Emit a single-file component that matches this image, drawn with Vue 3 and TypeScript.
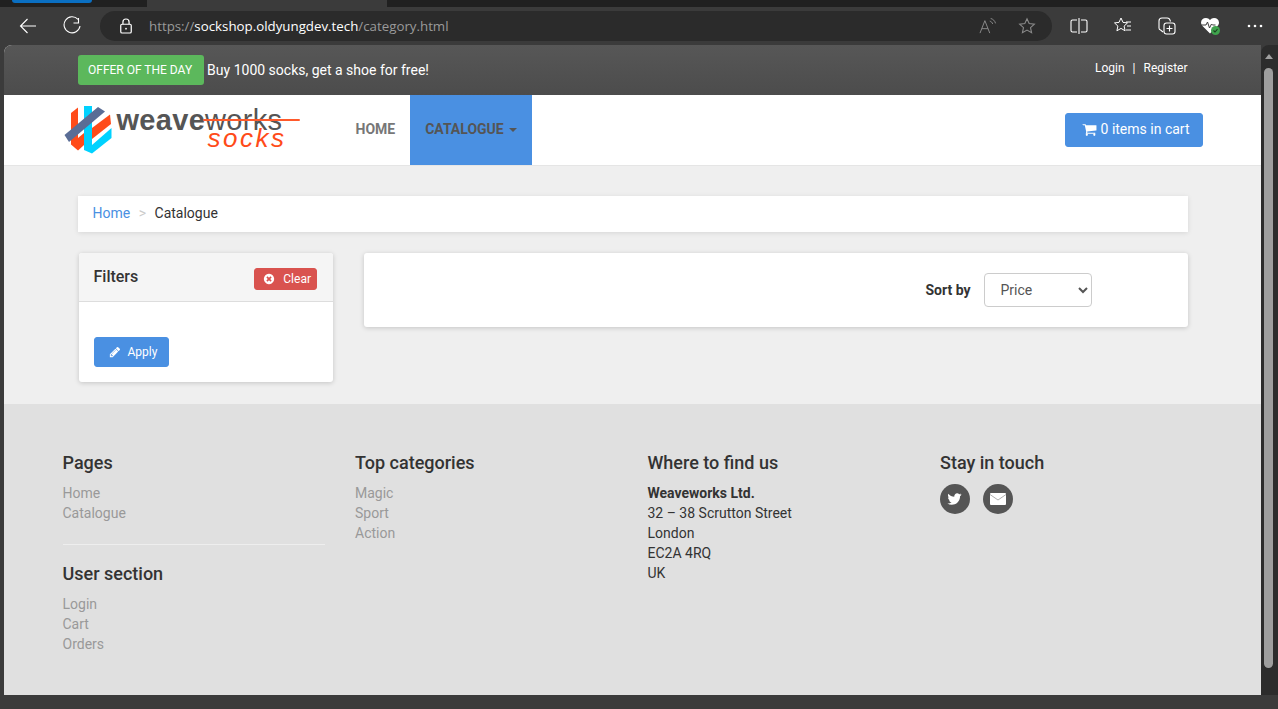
<script setup lang="ts">
interface FooterList {
    title: string;
    links: string[];
}

const pages: FooterList = { title: 'Pages', links: ['Home', 'Catalogue'] };
const userSection: FooterList = { title: 'User section', links: ['Login', 'Cart', 'Orders'] };
const categories: FooterList = { title: 'Top categories', links: ['Magic', 'Sport', 'Action'] };
const address: string[] = ['32 – 38 Scrutton Street', 'London', 'EC2A 4RQ', 'UK'];
</script>

<template>
    <div class="window">
        <div class="tabstrip">
            <span class="tab-pill"></span>
            <span class="tab-active"></span>
        </div>

        <div class="toolbar">
            <button type="button" class="tool" aria-label="Back">
                <svg viewBox="0 0 20 20" width="20" height="20" fill="none" stroke="#fff" stroke-width="1.1">
                    <path d="M18 10H2.500M9.500 3l-7 7 7 7" />
                </svg>
            </button>
            <button type="button" class="tool" aria-label="Refresh">
                <svg viewBox="0 0 20 20" width="20" height="20" fill="none" stroke="#fff" stroke-width="1.1">
                    <path d="M16 3.400a8 8 0 1 0 2 6.600" />
                    <path d="M16.500 2v5h-5" />
                </svg>
            </button>
            <div class="address">
                <svg class="lock" viewBox="0 0 16 18" width="14" height="16" fill="none" stroke="#fff" stroke-width="1.4">
                    <path d="M4.500 7V4.500a3.500 3.500 0 0 1 7 0V7" />
                    <rect x="2" y="7" width="12" height="10" rx="1.500" />
                    <circle cx="8" cy="12" r="1" fill="#fff" stroke="none" />
                </svg>
                <span class="url"><span class="url-dim">https://</span><span class="url-host">sockshop.oldyungdev.tech</span><span class="url-dim">/category.html</span></span>
                <svg class="read" viewBox="0 0 20 18" width="18" height="16" fill="none" stroke="#8a8a8a" stroke-width="1.1">
                    <path d="M1 17 6.500 3 12 17M3 12h7" />
                    <path d="M12 3.500c1.600.4 2.800 1.600 3.300 3.200" />
                    <path d="M13 .5c2.700.7 4.800 2.800 5.500 5.500" />
                </svg>
                <svg class="fav" viewBox="0 0 20 20" width="18" height="18" fill="none" stroke="#8a8a8a" stroke-width="1.2">
                    <path d="m10 2 2.400 5.300 5.800.6-4.300 3.900 1.200 5.700L10 14.600l-5.100 2.900 1.200-5.700L1.800 7.900l5.800-.6z" />
                </svg>
            </div>
            <div class="tools-right">
                <button type="button" class="tool" aria-label="Split screen">
                    <svg viewBox="0 0 20 20" width="20" height="20" fill="none" stroke="#fff" stroke-width="1.1">
                        <path d="M8 4H3.500A1.500 1.500 0 0 0 2 5.500v9A1.500 1.500 0 0 0 3.500 16H8M12 4h4.500A1.500 1.500 0 0 1 18 5.500v9a1.500 1.500 0 0 1-1.500 1.500H12M10 2v16" />
                    </svg>
                </button>
                <button type="button" class="tool" aria-label="Favorites">
                    <svg viewBox="0 0 20 20" width="20" height="20" fill="none" stroke="#fff" stroke-width="1">
                        <path d="m8 2 2 4.400 4.500.5-3.400 3.200 1 4.700L8 12.400l-4.100 2.400 1-4.700L1.500 6.900 6 6.400z" />
                        <path d="M13 6h5M14 10h4M13 14h5" />
                    </svg>
                </button>
                <button type="button" class="tool" aria-label="Collections">
                    <svg viewBox="0 0 20 20" width="20" height="20" fill="none" stroke="#fff" stroke-width="1.1">
                        <path d="M6 16 3.600 14A2 2 0 0 1 2 12V5a3 3 0 0 1 3-3h5a3 3 0 0 1 3 2l.5 1.500" />
                        <rect x="7" y="7" width="11" height="11" rx="2.500" />
                        <path d="M12.500 9.500v6M9.500 12.500h6" />
                    </svg>
                </button>
                <button type="button" class="tool" aria-label="Browser essentials">
                    <svg viewBox="0 0 22 22" width="22" height="22">
                        <path d="M10 18.500 2.500 11A5 5 0 0 1 1 7.500 5 5 0 0 1 6 3c1.700 0 3 .7 4 2 1-1.300 2.400-2 4-2a5 5 0 0 1 5 4.500c0 1.300-.5 2.500-1.500 3.500z" fill="#fff" />
                        <path d="M1 10h5l1.500-3 2 6 2-4 1 1h3" fill="none" stroke="#3b3b3b" stroke-width="1" />
                        <circle cx="15.500" cy="15.500" r="4.500" fill="#3fa34d" />
                        <path d="m13.500 15.500 1.500 1.500 2.500-2.800" fill="none" stroke="#1d3d22" stroke-width="1.1" />
                    </svg>
                </button>
                <button type="button" class="tool" aria-label="Settings and more">
                    <svg viewBox="0 0 20 20" width="20" height="20" fill="#fff">
                        <circle cx="4" cy="10" r="1.300" />
                        <circle cx="10" cy="10" r="1.300" />
                        <circle cx="16" cy="10" r="1.300" />
                    </svg>
                </button>
            </div>
        </div>

        <div class="viewport">
            <div class="page">
                <div class="topbar">
                    <div class="container topbar-row">
                        <div class="offer">
                            <a class="offer-badge">Offer of the day</a>
                            <a class="offer-text">Buy 1000 socks, get a shoe for free!</a>
                        </div>
                        <div class="account">
                            <a>Login</a>
                            <span class="account-sep">|</span>
                            <a>Register</a>
                        </div>
                    </div>
                </div>

                <nav class="navbar">
                    <div class="navbar-row">
                        <a class="logo">
                            <svg class="logo-mark" viewBox="62 104 50 52" width="50" height="52">
                                <path d="M70 113 77 107.500V150.500L70 144.500Z" fill="#ff4b19" />
                                <path d="M77 150.500 83 145V133L77 138Z" fill="#ff4b19" />
                                <path d="M91 128 109 114.500 110 124 91 139Z" fill="#ff4b19" />
                                <path d="M83 106H91V153.500L83 150Z" fill="#00d2ff" />
                                <path d="M91 145 110.500 128V138L91 153.500Z" fill="#00d2ff" />
                                <path d="M63.500 135 97 107 104 111.500 68 142Z" fill="#5a6d96" />
                            </svg>
                            <span class="wordmark"><b>weave</b>works</span>
                            <span class="strike"></span>
                            <span class="socks">socks</span>
                        </a>
                        <ul class="menu">
                            <li class="menu-item">Home</li>
                            <li class="menu-item menu-item--active">Catalogue <span class="caret"></span></li>
                        </ul>
                        <a class="btn btn-cart">
                            <svg viewBox="0 0 1792 1792" width="15" height="15" fill="#fff">
                                <path d="M704 1536q0 52-38 90t-90 38-90-38-38-90 38-90 90-38 90 38 38 90zm896 0q0 52-38 90t-90 38-90-38-38-90 38-90 90-38 90 38 38 90zm128-1088v512q0 24-16.500 42.500t-40.500 21.500l-1044 122q13 60 13 70 0 16-24 64h920q26 0 45 19t19 45-19 45-45 19h-1024q-26 0-45-19t-19-45q0-11 8-31.500t16-36 21.500-40 15.500-29.500l-177-823h-204q-26 0-45-19t-19-45 19-45 45-19h256q16 0 28.500 6.500t19.500 15.500 13 24.500 8 26 5.500 29.500 4.500 26h1201q26 0 45 19t19 45z" />
                            </svg>
                            <span>0 items in cart</span>
                        </a>
                    </div>
                </nav>

                <main class="content">
                    <div class="container">
                        <ol class="breadcrumb">
                            <li class="crumb-link">Home</li>
                            <li class="crumb-sep">&gt;</li>
                            <li>Catalogue</li>
                        </ol>
                        <div class="columns">
                            <aside class="panel filters">
                                <div class="filters-head">
                                    <h3>Filters</h3>
                                    <a class="btn btn-clear">
                                        <svg viewBox="0 0 1792 1792" width="12" height="12" fill="#fff">
                                            <path d="M1277 1122q0-26-19-45l-181-181 181-181q19-19 19-45 0-27-19-46l-90-90q-19-19-46-19-26 0-45 19l-181 181-181-181q-19-19-45-19-27 0-46 19l-90 90q-19 19-19 46 0 26 19 45l181 181-181 181q-19 19-19 45 0 27 19 46l90 90q19 19 46 19 26 0 45-19l181-181 181 181q19 19 45 19 27 0 46-19l90-90q19-19 19-46zm387-226q0 209-103 385.500t-279.500 279.500-385.500 103-385.500-103-279.500-279.500-103-385.500 103-385.500 279.500-279.500 385.500-103 385.500 103 279.500 279.500 103 385.500z" />
                                        </svg>
                                        <span>Clear</span>
                                    </a>
                                </div>
                                <div class="filters-body">
                                    <a class="btn btn-apply">
                                        <svg viewBox="0 0 1792 1792" width="12" height="12" fill="#fff">
                                            <path d="M491 1536l91-91-235-235-91 91v107h128v128h107zm523-928q0-22-22-22-10 0-17 7l-542 542q-7 7-7 17 0 22 22 22 10 0 17-7l542-542q7-7 7-17zm-54-192l416 416-832 832h-416v-416zm683 96q0 53-37 90l-166 166-416-416 166-165q36-38 90-38 53 0 91 38l235 234q37 39 37 91z" />
                                        </svg>
                                        <span>Apply</span>
                                    </a>
                                </div>
                            </aside>
                            <section class="panel sort">
                                <label class="sort-label" for="sort-by">Sort by</label>
                                <select id="sort-by" class="sort-select">
                                    <option>Price</option>
                                    <option>Name</option>
                                </select>
                            </section>
                        </div>
                    </div>
                </main>

                <footer class="footer">
                    <div class="footer-row">
                        <div class="footer-col">
                            <h4>{{ pages.title }}</h4>
                            <ul>
                                <li v-for="link in pages.links" :key="link">{{ link }}</li>
                            </ul>
                            <hr />
                            <h4>{{ userSection.title }}</h4>
                            <ul>
                                <li v-for="link in userSection.links" :key="link">{{ link }}</li>
                            </ul>
                        </div>
                        <div class="footer-col">
                            <h4>{{ categories.title }}</h4>
                            <ul>
                                <li v-for="link in categories.links" :key="link">{{ link }}</li>
                            </ul>
                        </div>
                        <div class="footer-col">
                            <h4>Where to find us</h4>
                            <p class="address-text">
                                <strong>Weaveworks Ltd.</strong>
                                <span v-for="line in address" :key="line">{{ line }}</span>
                            </p>
                        </div>
                        <div class="footer-col">
                            <h4>Stay in touch</h4>
                            <div class="social">
                                <a class="social-link" aria-label="Twitter">
                                    <svg viewBox="0 0 1792 1792" width="16" height="16" fill="#fff">
                                        <path d="M1620 408q-67 98-162 167 1 14 1 42 0 130-38 259.500t-115.500 248.500-184.500 210.500-258 146-323 54.500q-271 0-496-145 35 4 78 4 225 0 401-138-105-2-188-64.500t-114-159.500q33 5 61 5 43 0 85-11-112-23-185.500-111.500t-73.500-205.500v-4q68 38 146 41-66-44-105-115t-39-154q0-88 44-163 121 149 294.500 238.500t371.500 99.500q-8-38-8-74 0-134 94.500-228.500t228.500-94.500q140 0 236 102 109-21 205-78-37 115-142 178 100-11 200-54z" />
                                    </svg>
                                </a>
                                <a class="social-link" aria-label="Email">
                                    <svg viewBox="0 0 16 12" width="16" height="12">
                                        <rect width="16" height="12" rx="1" fill="#fff" />
                                        <path d="m0 1.500 8 5.500 8-5.500" fill="none" stroke="#8a8a8a" stroke-width=".7" />
                                    </svg>
                                </a>
                            </div>
                        </div>
                    </div>
                </footer>
            </div>

            <div class="scrollbar">
                <span class="scroll-arrow"></span>
                <span class="scroll-thumb"></span>
            </div>
        </div>
    </div>
</template>

<style scoped>
.window {
    display: flex;
    flex-direction: column;
    width: 1278px;
    height: 709px;
    overflow: hidden;
    background: #3b3b3b;
    font-family: Roboto, "Liberation Sans", sans-serif;
    font-size: 14px;
    line-height: 20px;
    color: #333;
}

.tabstrip {
    position: relative;
    flex: none;
    height: 7px;
    background: #202020;
}

.tab-pill {
    position: absolute;
    left: 12px;
    top: 0;
    width: 80px;
    height: 3px;
    border-radius: 0 0 8px 8px;
    background: #0a6fc2;
}

.tab-active {
    position: absolute;
    left: 147px;
    top: 0;
    width: 240px;
    height: 7px;
    background: #3b3b3b;
}

.toolbar {
    display: flex;
    flex: none;
    align-items: center;
    height: 38px;
    padding-left: 6px;
}

.tool {
    display: grid;
    place-items: center;
    flex: none;
    width: 44px;
    height: 30px;
    padding: 0;
    border: 0;
    background: transparent;
}

.address {
    display: flex;
    align-items: center;
    width: 952px;
    height: 30px;
    margin-left: 6px;
    border-radius: 15px;
    background: #2b2b2b;
    font-family: "Open Sans", "Noto Sans", sans-serif;
    font-size: 13.300px;
}

.lock {
    margin-left: 19px;
}

.url {
    flex: 1;
    margin-left: 16px;
}

.url-dim {
    color: #9a9a9a;
}

.url-host {
    color: #fff;
}

.read {
    margin-right: 21px;
}

.fav {
    margin-right: 16px;
}

.tools-right {
    display: flex;
    margin-left: 5px;
}

.viewport {
    display: flex;
    flex: none;
    height: 650px;
    padding-left: 4px;
}

.page {
    width: 1257px;
    height: 650px;
    overflow: hidden;
    border-radius: 8px 0 0 0;
    background: #efefef;
}

.scrollbar {
    position: relative;
    width: 17px;
    border-radius: 8px 0 0 0;
    background: #2c2c2c;
}

.scroll-arrow {
    position: absolute;
    left: 4px;
    top: 9px;
    width: 0;
    height: 0;
    border-right: 4.500px solid transparent;
    border-bottom: 5px solid #a0a0a0;
    border-left: 4.500px solid transparent;
}

.scroll-thumb {
    position: absolute;
    left: 3px;
    top: 23px;
    width: 9px;
    height: 600px;
    border-radius: 5px;
    background: #9e9e9e;
}

.container {
    width: 1110px;
    margin: 0 auto;
}

.topbar {
    height: 50px;
    background: linear-gradient(#575757, #4c4c4c);
}

.topbar-row {
    display: flex;
    align-items: center;
    justify-content: space-between;
    height: 50px;
}

.offer {
    display: flex;
    align-items: center;
    gap: 3.500px;
    color: #fff;
}

.offer-badge {
    padding: 5px 11.500px 5px 10.500px;
    border-radius: 3px;
    background: #5cb85c;
    font-size: 12px;
    text-transform: uppercase;
}

.account {
    display: flex;
    gap: 8px;
    margin-top: -5px;
    font-size: 12px;
    color: #fff;
}

.navbar {
    height: 71px;
    box-sizing: border-box;
    border-bottom: 1px solid #e5e5e5;
    background: #fff;
}

.navbar-row {
    display: flex;
    width: 1140px;
    height: 70px;
    margin: 0 auto;
}

.logo {
    position: relative;
    flex: none;
    width: 278px;
    height: 70px;
    color: #555;
}

.logo-mark {
    position: absolute;
    left: 0;
    top: 9px;
}

.wordmark {
    position: absolute;
    left: 54px;
    top: 14px;
    font-family: "Liberation Sans", sans-serif;
    font-size: 29px;
    line-height: 22px;
    letter-spacing: 0.3px;
    white-space: nowrap;
}

.strike {
    position: absolute;
    left: 140px;
    top: 24px;
    width: 97px;
    height: 2px;
    border-radius: 1px;
    background: #ff5a2c;
}

.socks {
    position: absolute;
    left: 145px;
    top: 34.500px;
    font-family: "Liberation Sans", sans-serif;
    font-size: 26px;
    font-style: italic;
    line-height: 16px;
    letter-spacing: 2.500px;
    color: #ff4b19;
}

.menu {
    display: flex;
    flex: 1;
    margin: 0;
    padding: 0;
    list-style: none;
}

.menu-item {
    height: 70px;
    padding: 24px 15px 0;
    box-sizing: border-box;
    font-weight: 700;
    text-transform: uppercase;
    color: #777;
}

.menu-item--active {
    background: #4a90e2;
    color: #555;
}

.caret {
    display: inline-block;
    margin-left: 2px;
    vertical-align: middle;
    border-top: 4px solid #555;
    border-right: 4px solid transparent;
    border-left: 4px solid transparent;
}

.btn {
    display: inline-flex;
    align-items: center;
    border: 1px solid #4a90e2;
    border-radius: 3px;
    background: #4a90e2;
    color: #fff;
}

.btn-cart {
    align-self: center;
    gap: 4px;
    height: 34px;
    padding: 0 12px 2px 16px;
    box-sizing: border-box;
}

.content {
    height: 238px;
    padding-top: 30px;
    box-sizing: border-box;
}

.breadcrumb {
    display: flex;
    gap: 8.500px;
    height: 36px;
    margin: 0 0 21px;
    padding: 7px 15px;
    box-sizing: border-box;
    list-style: none;
    background: #fff;
    box-shadow: 0 1px 5px rgb(0 0 0 / 10%);
}

.crumb-link {
    color: #4a90e2;
}

.crumb-sep {
    color: #ccc;
}

.columns {
    display: grid;
    grid-template-columns: 254px 824px;
    gap: 31px;
    align-items: start;
    padding-left: 1px;
}

.panel {
    box-sizing: border-box;
    border-radius: 3px;
    background: #fff;
    box-shadow: 0 1px 5px rgb(0 0 0 / 18%);
}

.filters-head {
    display: flex;
    align-items: flex-start;
    justify-content: space-between;
    height: 49px;
    padding: 15px 15.500px 0 15px;
    box-sizing: border-box;
    border-bottom: 1px solid #ddd;
    border-radius: 3px 3px 0 0;
    background: #f5f5f5;
}

.filters-head h3 {
    margin: 0;
    font-size: 16px;
    font-weight: 500;
    line-height: 18px;
}

.btn-clear {
    gap: 8px;
    height: 22px;
    padding: 0 5px 0 8px;
    box-sizing: border-box;
    border-color: #d9534f;
    background: #d9534f;
    font-size: 12px;
}

.filters-body {
    height: 80px;
    padding: 35px 15px 0;
    box-sizing: border-box;
}

.btn-apply {
    gap: 7px;
    height: 30px;
    padding: 0 11px 0 14px;
    box-sizing: border-box;
    font-size: 12px;
}

.sort {
    display: flex;
    align-items: center;
    justify-content: flex-end;
    gap: 13px;
    height: 74px;
    padding-right: 96px;
}

.sort-label {
    font-weight: 700;
}

.sort-select {
    width: 108px;
    height: 34px;
    padding: 0 12px;
    border: 1px solid #ccc;
    border-radius: 4px;
    background: #fff;
    font-family: Roboto, sans-serif;
    font-size: 14px;
    color: #555;
}

.footer {
    height: 291px;
    padding-top: 49px;
    box-sizing: border-box;
    background: #e0e0e0;
}

.footer-row {
    display: grid;
    grid-template-columns: repeat(4, 292.500px);
    width: 1170px;
    margin: 0 auto;
}

.footer-col {
    padding: 0 15px;
    min-width: 0;
    box-sizing: border-box;
}

.footer-col h4 {
    margin: 0 0 10px;
    font-size: 18px;
    font-weight: 500;
    line-height: 20px;
}

.footer-col ul {
    margin: 0;
    padding: 0;
    list-style: none;
    color: #999;
}

.footer-col hr {
    height: 1px;
    margin: 21px 0 19px;
    border: 0;
    background: #eee;
}

.address-text {
    display: flex;
    flex-direction: column;
    margin: 0;
}

.social {
    display: flex;
    gap: 13px;
    margin-top: 11px;
}

.social-link {
    display: grid;
    place-items: center;
    width: 30px;
    height: 30px;
    border-radius: 50%;
    background: #555;
}
</style>

<style>
html,
body {
    margin: 0;
    overflow: hidden;
}
</style>
